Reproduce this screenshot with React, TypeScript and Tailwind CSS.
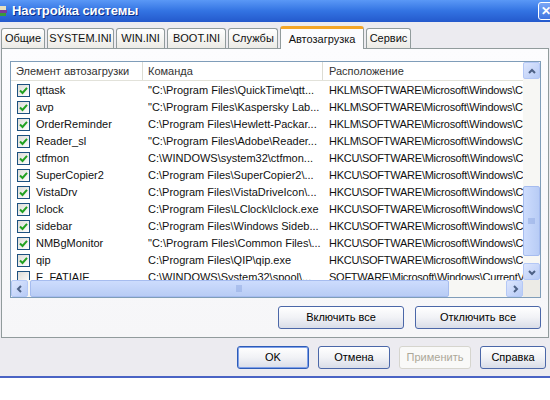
import React from 'react';

type Row = { name: string; cmd: string; loc: string; on: boolean };

const rows: Row[] = [
  { name: 'qttask', cmd: '"C:\\Program Files\\QuickTime\\qtt...', loc: 'HKLM\\SOFTWARE\\Microsoft\\Windows\\CurrentVersion\\Run', on: true },
  { name: 'avp', cmd: '"C:\\Program Files\\Kaspersky Lab...', loc: 'HKLM\\SOFTWARE\\Microsoft\\Windows\\CurrentVersion\\Run', on: true },
  { name: 'OrderReminder', cmd: 'C:\\Program Files\\Hewlett-Packar...', loc: 'HKLM\\SOFTWARE\\Microsoft\\Windows\\CurrentVersion\\Run', on: true },
  { name: 'Reader_sl', cmd: '"C:\\Program Files\\Adobe\\Reader...', loc: 'HKLM\\SOFTWARE\\Microsoft\\Windows\\CurrentVersion\\Run', on: true },
  { name: 'ctfmon', cmd: 'C:\\WINDOWS\\system32\\ctfmon...', loc: 'HKCU\\SOFTWARE\\Microsoft\\Windows\\CurrentVersion\\Run', on: true },
  { name: 'SuperCopier2', cmd: 'C:\\Program Files\\SuperCopier2\\...', loc: 'HKCU\\SOFTWARE\\Microsoft\\Windows\\CurrentVersion\\Run', on: true },
  { name: 'VistaDrv', cmd: 'C:\\Program Files\\VistaDriveIcon\\...', loc: 'HKCU\\SOFTWARE\\Microsoft\\Windows\\CurrentVersion\\Run', on: true },
  { name: 'lclock', cmd: 'C:\\Program Files\\LClock\\lclock.exe', loc: 'HKCU\\SOFTWARE\\Microsoft\\Windows\\CurrentVersion\\Run', on: true },
  { name: 'sidebar', cmd: 'C:\\Program Files\\Windows Sideb...', loc: 'HKCU\\SOFTWARE\\Microsoft\\Windows\\CurrentVersion\\Run', on: true },
  { name: 'NMBgMonitor', cmd: '"C:\\Program Files\\Common Files\\...', loc: 'HKCU\\SOFTWARE\\Microsoft\\Windows\\CurrentVersion\\Run', on: true },
  { name: 'qip', cmd: 'C:\\Program Files\\QIP\\qip.exe', loc: 'HKCU\\SOFTWARE\\Microsoft\\Windows\\CurrentVersion\\Run', on: true },
  { name: 'E_FATIAIE', cmd: 'C:\\WINDOWS\\System32\\spool\\...', loc: 'SOFTWARE\\Microsoft\\Windows\\CurrentVersion\\Run', on: false },
];

const tabs = [
  { label: 'Общие', w: 'w-[44px]' },
  { label: 'SYSTEM.INI', w: 'w-[67px]' },
  { label: 'WIN.INI', w: 'w-[49px]' },
  { label: 'BOOT.INI', w: 'w-[59px]' },
  { label: 'Службы', w: 'w-[50px]' },
  { label: 'Автозагрузка', w: 'w-[84px]', active: true },
  { label: 'Сервис', w: 'w-[45px]' },
];

function Check({ on }: { on: boolean }) {
  return (
    <div className="w-[13px] h-[13px] border border-[#1c5180] bg-gradient-to-br from-[#dcdcd7] to-white flex items-center justify-center shrink-0">
      {on && (
        <svg width="9" height="9" viewBox="0 0 9 9">
          <path d="M1 4.5 L3.5 7 L8 1.8" fill="none" stroke="#21a121" strokeWidth="2" />
        </svg>
      )}
    </div>
  );
}

function Arrow({ dir }: { dir: 'up' | 'down' | 'left' | 'right' }) {
  const pts = {
    up: '3,8 6,5 9,8',
    down: '3,5 6,8 9,5',
    left: '7,3 4,6 7,9',
    right: '5,3 8,6 5,9',
  }[dir];
  return (
    <div className="w-[17px] h-[17px] rounded-[2px] border border-[#b4c8f6] bg-gradient-to-br from-[#dde6fd] to-[#b7cbf6] flex items-center justify-center shrink-0">
      <svg width="12" height="12" viewBox="0 0 12 12">
        <polyline points={pts} fill="none" stroke="#4d6185" strokeWidth="2" />
      </svg>
    </div>
  );
}

function XpButton({ children, className = '', main = false }: { children: React.ReactNode; className?: string; main?: boolean }) {
  return (
    <div
      className={`h-[23px] rounded-[3px] border ${main ? 'border-[#2c5bb8] shadow-[inset_0_0_0_1px_#7fa0e8]' : 'border-[#4b67a8]'} bg-gradient-to-b from-white via-[#f1f2f6] to-[#d9dde8] flex items-center justify-center text-black ${className}`}
    >
      {children}
    </div>
  );
}

export default function App() {
  return (
    <div className="w-[550px] h-[400px] bg-white overflow-hidden font-['Liberation_Sans',sans-serif] text-[11px] text-[#111]">
      <div className="h-[378px] bg-[#ecebf0] border-b-2 border-[#4a63c4] flex flex-col">
        {/* Title bar */}
        <div className="h-[22px] shrink-0 bg-gradient-to-b from-[#5a98f6] via-[#3373e2] to-[#2459cc] flex items-center relative overflow-hidden">
          <svg width="9" height="14" viewBox="0 0 9 14">
            <rect x="0" y="2" width="6" height="4" fill="#e8e0c0" />
            <rect x="0" y="6" width="7" height="3" fill="#7a3c9a" />
            <rect x="0" y="9" width="6" height="3" fill="#3a9a3a" />
          </svg>
          <span className="ml-[3px] text-white font-bold text-[13px] tracking-[-0.1px] [text-shadow:1px_1px_0_#0c2f8a]">
            Настройка системы
          </span>
          <div className="absolute right-[-9px] top-[2px] w-[21px] h-[18px] rounded-[3px] border border-white bg-gradient-to-b from-[#7aa6f6] to-[#3f74e0] flex items-center pl-[2px]">
            <span className="text-white font-bold text-[12px] leading-none">✕</span>
          </div>
        </div>

        {/* Tabs */}
        <div className="mt-[4px] h-[22px] flex items-end pl-[1px] gap-[2px] shrink-0">
          {tabs.map((t) =>
            t.active ? (
              <div
                key={t.label}
                className={`${t.w} h-[23px] -mb-px relative z-10 bg-[#fcfcfe] border border-b-0 border-[#919b9c] rounded-t-[3px] border-t-[3px] border-t-[#f4a628] flex items-center justify-center`}
              >
                {t.label}
              </div>
            ) : (
              <div
                key={t.label}
                className={`${t.w} h-[20px] bg-gradient-to-b from-white to-[#ecebe6] border border-b-0 border-[#919b9c] rounded-t-[3px] flex items-center justify-center`}
              >
                {t.label}
              </div>
            )
          )}
        </div>

        {/* Tab panel */}
        <div className="mx-[1px] h-[290px] border border-[#919b9c] bg-gradient-to-b from-[#fcfcfe] to-[#f6f6f8] flex flex-col shrink-0">
          {/* List view */}
          <div className="mt-[12px] ml-[8px] w-[531px] h-[237px] border border-[#7f9db9] bg-white flex flex-col">
            <div className="flex flex-1 min-h-0">
              <div className="flex-1 min-w-0 overflow-hidden flex flex-col">
                {/* Header */}
                <div className="h-[19px] shrink-0 flex border-b border-[#e2e2da] bg-white text-[#333]">
                  <div className="w-[132px] shrink-0 pl-[5px] flex items-center border-r border-[#dcdcd4]">Элемент автозагрузки</div>
                  <div className="w-[180px] shrink-0 pl-[5px] flex items-center border-r border-[#dcdcd4]">Команда</div>
                  <div className="flex-1 pl-[6px] flex items-center whitespace-nowrap">Расположение</div>
                </div>
                {/* Rows */}
                <div className="flex-1 overflow-hidden pt-[1px]">
                  {rows.map((r) => (
                    <div key={r.name} className="h-[17px] flex items-center whitespace-nowrap">
                      <div className="w-[132px] shrink-0 pl-[6px] flex items-center gap-[6px]">
                        <Check on={r.on} />
                        <span>{r.name}</span>
                      </div>
                      <div className="w-[180px] shrink-0 pl-[5px] overflow-hidden">{r.cmd}</div>
                      <div className="flex-1 pl-[6px] overflow-hidden tracking-[-0.25px]">{r.loc}</div>
                    </div>
                  ))}
                </div>
              </div>
              {/* Vertical scrollbar */}
              <div className="w-[17px] shrink-0 bg-[#f7f7f4] flex flex-col">
                <Arrow dir="up" />
                <div className="flex-1 flex flex-col">
                  <div className="h-[107px]" />
                  <div className="h-[70px] rounded-[2px] border border-[#a6bcef] bg-gradient-to-r from-[#cddcfd] to-[#b8ccf5] flex items-center justify-center">
                    <svg width="7" height="7" viewBox="0 0 7 7">
                      <path d="M0 1h7M0 3h7M0 5h7" stroke="#8fa8e0" strokeWidth="1" />
                    </svg>
                  </div>
                </div>
                <Arrow dir="down" />
              </div>
            </div>
            {/* Horizontal scrollbar */}
            <div className="h-[17px] shrink-0 flex bg-[#f7f7f4]">
              <Arrow dir="left" />
              <div className="flex-1 flex items-stretch pl-[2px]">
                <div className="w-[419px] rounded-[2px] border border-[#a6bcef] bg-gradient-to-b from-[#cddcfd] to-[#b8ccf5] flex items-center justify-center">
                  <svg width="7" height="7" viewBox="0 0 7 7">
                    <path d="M1 0v7M3 0v7M5 0v7" stroke="#8fa8e0" strokeWidth="1" />
                  </svg>
                </div>
              </div>
              <Arrow dir="right" />
              <div className="w-[17px] shrink-0 bg-[#ecebe6]" />
            </div>
          </div>

          {/* Enable / disable all */}
          <div className="mt-[8px] flex justify-end gap-[11px] pr-[7px]">
            <XpButton className="w-[126px]">Включить все</XpButton>
            <XpButton className="w-[126px]">Отключить все</XpButton>
          </div>
        </div>

        {/* Dialog buttons */}
        <div className="mt-[8px] flex gap-[9px] pl-[237px]">
          <XpButton main className="w-[72px]">OK</XpButton>
          <XpButton className="w-[72px]">Отмена</XpButton>
          <div className="w-[72px] h-[23px] rounded-[3px] border border-[#d6d5ce] bg-[#f9f9f8] flex items-center justify-center text-[#aca899]">
            Применить
          </div>
          <XpButton className="w-[66px] shrink-0">Справка</XpButton>
        </div>
      </div>
    </div>
  );
}
